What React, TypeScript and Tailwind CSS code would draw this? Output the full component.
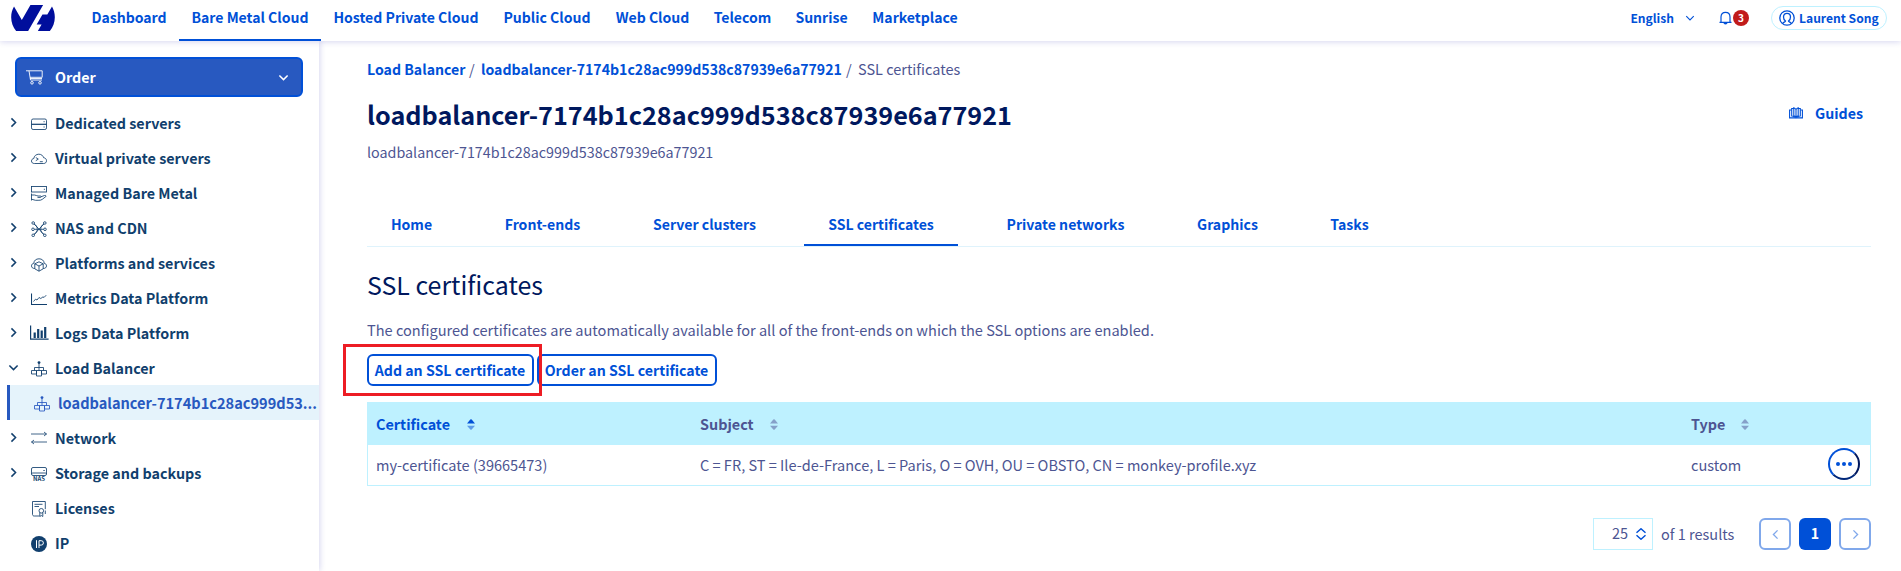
import type { ReactNode } from "react";

type IconProps = { children: ReactNode; className?: string };

function Icon({ children, className = "h-4 w-4" }: IconProps) {
  return (
    <svg viewBox="0 0 16 16" className={`shrink-0 ${className}`} fill="none" stroke="currentColor" strokeWidth="0.85">
      {children}
    </svg>
  );
}

const balancerShape = (
  <>
    <circle cx="8" cy="1.6" r="1.4" fill="currentColor" stroke="none" />
    <path d="M8 2v7.500M3.500 9.500V6.500h9v3" />
    <path d="M.5 9.500h5v3.500h-5zM10.500 9.500h5v3.500h-5zM5.500 9.500h5v5.500h-5z" />
  </>
);

const icons: Record<string, ReactNode> = {
  server: (
    <>
      <rect x=".5" y="3" width="15" height="10.500" rx="1.600" />
      <path d="M.5 8.300h15" strokeWidth="1.200" />
      <path d="M12.500 5.700h1.200M12.500 11h1.200" />
    </>
  ),
  cloud: (
    <>
      <path d="M3.400 12.500C1.600 12.500.5 11.500.5 10c0-1.300.9-2.300 2.300-2.500C3 5 5.200 3.200 7.800 3.200c2.400 0 4.200 1.300 4.800 3.500 1.700.2 2.900 1.400 2.900 3 0 1.700-1.100 2.800-2.900 2.800z" />
      <path d="M4.800 6.500l2.500 1.600-2.500 1.600M8.800 10.700h3" />
    </>
  ),
  managed: (
    <>
      <rect x=".5" y=".5" width="15" height="5.500" />
      <path d="M12.800 3.300h1.200M.5 7.500v7M.5 9h3c1.500 0 2.200 1 3.500 1h2.500c1 .2.900 1.400-.2 1.400H6.500" />
      <path d="M9.900 10.800l3.600-1.300c1.300-.3 2 .4 1.400 1l-3.700 2.900c-1 .7-2 .9-3.300.9H4.500L.5 13.200" />
    </>
  ),
  network: (
    <>
      <path d="M3 2.900C5 4 6.300 6 6.300 8.300S5 12.500 3 13.500M13 2.900C11 4 9.700 6 9.700 8.300s1.300 4.200 3.300 5.200M3.300 8.300h9.400M3.200 2.900l9.600 10.500M12.800 2.900L3.200 13.400" />
      <circle cx="2.200" cy="2" r="1.300" />
      <circle cx="13.800" cy="2" r="1.300" />
      <circle cx="2" cy="8.300" r="1.300" />
      <circle cx="14" cy="8.300" r="1.300" />
      <circle cx="2.200" cy="14.300" r="1.300" />
      <circle cx="13.800" cy="14.300" r="1.300" />
    </>
  ),
  platform: (
    <>
      <path d="M8 5.800l4.200 2v5L8 15.200l-4.200-2.400v-5zM3.800 7.800L8 10l4.200-2.200M8 10v5.200" />
      <path d="M3.800 12.500C1.600 12.500.5 11.400.5 9.900c0-1.500 1-2.400 2.300-2.600C3 4.500 5 2.800 8 2.800s5 1.700 5.200 4.500c1.300.2 2.300 1.100 2.300 2.600 0 1.500-1.100 2.600-3.300 2.600" />
    </>
  ),
  metrics: (
    <>
      <path d="M.5 2.500v11h15.500" strokeWidth="1.100" />
      <path d="M2.500 10.500l2-2.300 1.500.8 2-2.500 1.800 1L12 5.800l1 .7 2.200-2.300" />
    </>
  ),
  ip: (
    <>
      <circle cx="8" cy="8" r="8" fill="currentColor" stroke="none" />
      <path d="M5.500 4.200v7.800M8 12V4.700h2.200a2.200 2.200 0 010 4.400H8" stroke="#fff" strokeWidth="1" />
    </>
  ),
  balancer: balancerShape,
  arrows: <path d="M0 3h15.500M13 1l2.500 2L13 5M16 11H.5M3 9L.5 11 3 13" strokeWidth=".8" />,
  license: (
    <>
      <path d="M8.500 15H3.200c-1 0-1.700-.6-1.700-1.600V.5h12.800v7.700M3.500 3.300h8M3.500 5.500h4.500M14.300 13v-3.500" />
      <circle cx="10.300" cy="9.800" r="2.300" />
      <path d="M8.800 11.700v3.800l1.500-1 1.500 1v-3.800" />
    </>
  ),
};

function MenuIcon({ name }: { name: string }) {
  if (name === "logs") {
    return (
      <svg viewBox="0 0 19 15" className="-mt-1 -ml-[1px] h-[15px] w-[19px] shrink-0" fill="none" stroke="currentColor">
        <path d="M.6.5v13.700h18" strokeWidth="1.200" />
        <path d="M4.700 7.500v5.500M8.200 4v9M11.700 5.500v7.500M15.200 2v11" strokeWidth="2.200" />
      </svg>
    );
  }
  if (name === "storage") {
    return (
      <span className="flex w-4 flex-col items-center">
        <svg viewBox="0 0 16 9" className="h-[9px] w-4" fill="none" stroke="currentColor" strokeWidth=".85">
          <path d="M2 .5h12q1.500 0 1.500 1.500v5q0 1.500-1.500 1.500H2Q.5 8.500.5 7V2Q.5.5 2 .5zM12.300 3.500h1.500M.5 6.500q.5-.5 1.500-.5h12q1 0 1.500.5" />
        </svg>
        <span className="text-[6px] leading-[6px] font-bold">NAS</span>
      </span>
    );
  }
  return <Icon>{icons[name]}</Icon>;
}

function Chevron({ dir, className }: { dir: "right" | "down" | "left"; className: string }) {
  const d = dir === "right" ? "M5 2l6 6-6 6" : dir === "left" ? "M11 2L5 8l6 6" : "M2 5l6 6 6-6";
  return (
    <svg viewBox="0 0 16 16" className={`shrink-0 ${className}`} fill="none" stroke="currentColor">
      <path d={d} />
    </svg>
  );
}

const universes = [
  { label: "Dashboard", box: "w-[100px]" },
  { label: "Bare Metal Cloud", box: "w-[142px]", active: true },
  { label: "Hosted Private Cloud", box: "w-[170px]" },
  { label: "Public Cloud", box: "w-[112px]" },
  { label: "Web Cloud", box: "w-[99px]" },
  { label: "Telecom", box: "w-[81px]" },
  { label: "Sunrise", box: "w-[77px]" },
  { label: "Marketplace", box: "w-[110px]" },
];

const menu = [
  { label: "Dedicated servers", icon: "server", open: false },
  { label: "Virtual private servers", icon: "cloud", open: false },
  { label: "Managed Bare Metal", icon: "managed", open: false },
  { label: "NAS and CDN", icon: "network", open: false },
  { label: "Platforms and services", icon: "platform", open: false },
  { label: "Metrics Data Platform", icon: "metrics", open: false },
  { label: "Logs Data Platform", icon: "logs", open: false },
  { label: "Load Balancer", icon: "balancer", open: true, child: "loadbalancer-7174b1c28ac999d53..." },
  { label: "Network", icon: "arrows", open: false },
  { label: "Storage and backups", icon: "storage", open: false },
  { label: "Licenses", icon: "license" },
  { label: "IP", icon: "ip" },
];

const tabs = [
  { label: "Home", box: "w-[89px]" },
  { label: "Front-ends", box: "w-[125px]" },
  { label: "Server clusters", box: "w-[151px]" },
  { label: "SSL certificates", box: "w-[154px]", active: true },
  { label: "Private networks", box: "w-[167px]" },
  { label: "Graphics", box: "w-[109px]" },
  { label: "Tasks", box: "w-[87px]" },
];

function Header() {
  return (
    <header className="relative z-10 flex h-[41px] shrink-0 items-start bg-white shadow-[0_1px_6px_rgba(0,0,160,0.16)]">
      <svg viewBox="0 4.852 24 14.300" className="mt-[5px] ml-[11px] h-[26px] w-11 shrink-0" fill="#000e9c">
        <path d="M19.881 10.095l2.563-4.450C23.434 7.389 24 9.404 24 11.555c0 2.880-1.017 5.523-2.710 7.594h-6.620l2.040-3.541h-2.696l3.176-5.513h2.691z" />
        <path d="M17.561 4.852L9.333 19.140l.003.009H2.709C1.014 17.077 0 14.435 0 11.555c0-2.152.570-4.170 1.561-5.918L5.855 13.100l4.747-8.248h6.959z" />
      </svg>
      <nav className="ml-6 flex text-[14.050px] font-bold text-[#0050d7]">
        {universes.map((u) => (
          <a
            key={u.label}
            className={`flex h-[41px] justify-center border-b-2 pt-[5px] leading-6 whitespace-nowrap ${u.box} ${
              u.active ? "border-[#0050d7]" : "border-transparent"
            }`}
          >
            {u.label}
          </a>
        ))}
      </nav>
      <div className="mt-1.5 mr-[14px] ml-auto flex h-6 items-center text-[12.100px] font-bold text-[#0050d7]">
        <span className="leading-6">English</span>
        <Chevron dir="down" className="ml-[11px] h-[10px] w-[10px] stroke-[1.800]" />
        <svg viewBox="0 0 13 14" className="ml-6 h-[14px] w-[13px]" fill="none" stroke="currentColor" strokeWidth="1.200">
          <path d="M.5 11.300h12M2 11.300V6c0-3 1.800-4.700 4.500-4.700S11 3 11 6v5.300" />
          <path d="M5 11.500c0 2 3 2 3 0" fill="currentColor" />
        </svg>
        <span className="ml-[1px] flex h-4 w-4 items-center justify-center rounded-full bg-[#c11b1b] text-[10px] leading-4 text-white">
          3
        </span>
        <span className="ml-[22px] flex h-6 w-[116px] items-center rounded-full border border-[#bef1ff] pl-[7px] whitespace-nowrap">
          <svg viewBox="0 0 16 16" className="mr-1 h-4 w-4 shrink-0" fill="none" stroke="currentColor" strokeWidth="1.300">
            <circle cx="8" cy="8" r="7.200" />
            <path d="M3.800 13.500c.3-1.400 2.400-1.300 2.700-2.500C5 10 4.500 8.500 4.500 7c0-2.300 1.400-3.700 3.500-3.700S11.500 4.700 11.500 7c0 1.500-.5 3-2 4 .3 1.200 2.400 1.100 2.700 2.500" />
          </svg>
          Laurent Song
        </span>
      </div>
    </header>
  );
}

function Sidebar() {
  return (
    <aside className="flex w-[319px] shrink-0 flex-col shadow-[1px_0_6px_rgba(0,0,160,0.16)]">
      <button className="mt-4 ml-[15px] flex h-10 w-[288px] shrink-0 items-center rounded-md border-2 border-[#0050d7] bg-[#2859c0] pr-3 pl-[9px] text-[14.300px] font-bold text-white">
        <svg viewBox="0 0 17 15" className="h-[15px] w-[17px]" fill="none" stroke="currentColor" strokeWidth=".9">
          <path d="M0 .8h3l1.500 9.200h11.500M3 .8h13.200v6.500H4" />
          <path d="M4 8.500h12" />
          <circle cx="6" cy="12.800" r="1.300" />
          <circle cx="14" cy="12.800" r="1.300" />
        </svg>
        <span className="ml-3 leading-6">Order</span>
        <Chevron dir="down" className="ml-auto h-[11px] w-[11px] stroke-[2.200]" />
      </button>
      <ul className="mt-2 flex flex-col text-[14.330px] font-bold text-[#113f6d]">
        {menu.map((m) => (
          <li key={m.label}>
            <div className="flex h-[35px] items-center">
              <span className="flex w-[31px] pl-2">
                {m.open === false && <Chevron dir="right" className="h-[11px] w-[11px] stroke-[2.200]" />}
                {m.open === true && <Chevron dir="down" className="h-[11px] w-[11px] stroke-[2.200]" />}
              </span>
              <span className="flex w-6 items-center pt-[3px]">
                <MenuIcon name={m.icon} />
              </span>
              <span className="leading-6 whitespace-nowrap">{m.label}</span>
            </div>
            {m.child && (
              <div className="ml-[7px] flex h-[35px] items-center border-l-[3px] border-[#2859c0] bg-[#e5f3fb] pl-6 text-[#2859c0]">
                <span className="flex w-6 pt-[3px]">
                  <Icon>{balancerShape}</Icon>
                </span>
                <span className="text-[14.580px] leading-6 whitespace-nowrap">{m.child}</span>
              </div>
            )}
          </li>
        ))}
      </ul>
    </aside>
  );
}

function Sort({ active = false }: { active?: boolean }) {
  return (
    <svg viewBox="0 0 8 11" className="mt-[1px] h-[11px] w-2 shrink-0">
      <path d="M0 4.500L3.300.6q.7-.7 1.400 0L8 4.500z" fill={active ? "#0050d7" : "#85a0c9"} />
      <path d="M0 6.800h8L4.700 10.500q-.7.700-1.400 0z" fill={active ? "#5e9ce8" : "#85a0c9"} />
    </svg>
  );
}

function CertificateTable() {
  return (
    <div className="mt-4 h-[84px] border border-[#bef1ff] text-[14.560px] text-[#4d5592]">
      <div className="flex h-[42px] items-center bg-[#bef1ff] pl-2 text-[14.400px] leading-6 font-bold">
        <div className="flex w-[324px] items-center text-[#0050d7]">
          <span className="w-[91px]">Certificate</span>
          <Sort active />
        </div>
        <div className="flex w-[991px] items-center">
          <span className="w-[70px]">Subject</span>
          <Sort />
        </div>
        <div className="flex items-center">
          <span className="w-[50px]">Type</span>
          <Sort />
        </div>
      </div>
      <div className="flex h-10 items-start pt-2 pl-2 leading-6">
        <div className="w-[324px]">my-certificate (39665473)</div>
        <div className="w-[991px]">C = FR, ST = Ile-de-France, L = Paris, O = OVH, OU = OBSTO, CN = monkey-profile.xyz</div>
        <div>custom</div>
        <button className="-mt-[5px] mr-[10px] ml-auto flex h-8 w-8 items-center justify-center gap-[2px] rounded-full border-2 border-t-[#0050d7] border-r-[#00185e] border-b-[#00287a] border-l-[#0050d7]">
          <i className="h-1 w-1 rounded-full bg-[#0050d7]" />
          <i className="h-1 w-1 rounded-full bg-[#0050d7]" />
          <i className="h-1 w-1 rounded-full bg-[#0050d7]" />
        </button>
      </div>
    </div>
  );
}

function Pagination() {
  return (
    <div className="mt-8 flex h-8 items-center justify-end text-[14.500px] text-[#4d5592]">
      <div className="flex h-8 w-[60px] items-center border border-[#bef1ff] pl-[18px]">
        <span className="-mt-0.5 w-[24px] leading-6">25</span>
        <svg viewBox="0 0 10 12" className="h-3 w-[10px]" fill="none" stroke="#0050d7" strokeWidth="1.500">
          <path d="M.5 4.700L5 .8l4.500 3.900M.5 7.300L5 11.200l4.500-3.900" />
        </svg>
      </div>
      <span className="ml-2 w-[98px] leading-6">of 1 results</span>
      <button className="flex h-8 w-8 items-center justify-center rounded-md border-2 border-[#80a8eb] text-[#80a8eb]">
        <Chevron dir="left" className="h-[11px] w-[11px] stroke-[2]" />
      </button>
      <button className="ml-2 flex h-8 w-8 items-center justify-center rounded-md bg-[#0050d7] text-[14.200px] font-bold text-white">
        1
      </button>
      <button className="ml-2 flex h-8 w-8 items-center justify-center rounded-md border-2 border-[#80a8eb] text-[#80a8eb]">
        <Chevron dir="right" className="h-[11px] w-[11px] stroke-[2]" />
      </button>
    </div>
  );
}

export default function App() {
  return (
    <div className="flex h-[571px] w-full flex-col overflow-hidden bg-white font-['Noto_Sans_CJK_SC','Noto_Sans',sans-serif]">
      <Header />
      <div className="flex min-h-0 flex-1">
        <Sidebar />
        <main className="flex flex-1 flex-col pt-4 pr-[30px] pl-12">
          <div className="flex h-6 items-center text-[14.500px] leading-6 whitespace-nowrap text-[#4d5592]">
            <a className="w-[102px] text-[14.130px] font-bold text-[#0050d7]">Load Balancer</a>
            <span className="w-3">/</span>
            <a className="w-[365px] text-[14.120px] font-bold text-[#0050d7]">loadbalancer-7174b1c28ac999d538c87939e6a77921</a>
            <span className="w-3">/</span>
            <span>SSL certificates</span>
          </div>
          <div className="mt-[15px] flex h-9 items-center justify-between">
            <h1 className="text-[25.220px] leading-9 font-bold text-[#00185e]">loadbalancer-7174b1c28ac999d538c87939e6a77921</h1>
            <a className="mr-2 mb-[2px] flex items-center text-[14.200px] leading-6 font-bold text-[#0050d7]">
              <svg viewBox="0 0 14 12" className="mr-3 h-3 w-[14px]" fill="none" stroke="currentColor" strokeWidth="1.100">
                <path d="M2.500 3H.6v7.900h12.800V3h-1.900" />
                <path d="M7 2.500v8M7 2.500Q6 1 4.800.7v8.100Q6 9 7 10.500 8 9 9.200 8.800V.7Q8 1 7 2.500M4.800 1.500H2.700v7.500q2 0 2.800 1.500M9.200 1.500h2.100v7.500q-2 0-2.800 1.500" />
              </svg>
              Guides
            </a>
          </div>
          <p className="mt-2 text-[14.320px] leading-6 text-[#4d5592]">loadbalancer-7174b1c28ac999d538c87939e6a77921</p>
          <nav className="mt-10 flex h-[43px] shrink-0 gap-6 border-b border-[#dff3fc] text-[14.070px] font-bold text-[#0050d7]">
            {tabs.map((t) => (
              <a
                key={t.label}
                className={`flex h-[42px] items-center justify-center border-b-2 pt-[2px] whitespace-nowrap ${t.box} ${
                  t.active ? "border-[#0050d7]" : "border-transparent"
                }`}
              >
                {t.label}
              </a>
            ))}
          </nav>
          <h2 className="mt-[19px] text-[24.950px] leading-9 text-[#00185e]">SSL certificates</h2>
          <p className="mt-4 text-[14.580px] leading-6 text-[#4d5592]">
            The configured certificates are automatically available for all of the front-ends on which the SSL options are enabled.
          </p>
          <div className="relative mt-3 flex h-8 gap-[3px] text-[14.160px] font-bold text-[#0050d7]">
            <button className="flex w-[167px] items-center justify-center rounded-md border-2 border-[#0050d7] pt-[2px] pr-[1px] whitespace-nowrap">
              Add an SSL certificate
            </button>
            <button className="flex w-[180px] items-center justify-center rounded-md border-2 border-[#0050d7] pt-[2px] pr-[1px] whitespace-nowrap">
              Order an SSL certificate
            </button>
            <div className="pointer-events-none absolute -top-[10px] -left-6 h-[52px] w-[199px] border-[3px] border-[#ed1c24]" />
          </div>
          <CertificateTable />
          <Pagination />
        </main>
      </div>
    </div>
  );
}
